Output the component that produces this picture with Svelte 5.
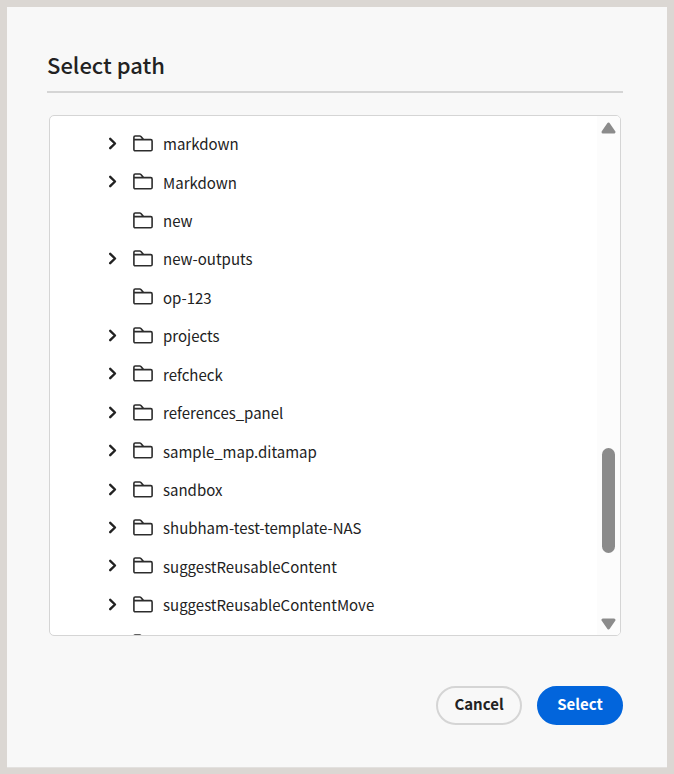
<script>
  let folders = $state([
    { name: "markdown", expandable: true },
    { name: "Markdown", expandable: true },
    { name: "new", expandable: false },
    { name: "new-outputs", expandable: true },
    { name: "op-123", expandable: false },
    { name: "projects", expandable: true },
    { name: "refcheck", expandable: true },
    { name: "references_panel", expandable: true },
    { name: "sample_map.ditamap", expandable: true },
    { name: "sandbox", expandable: true },
    { name: "shubham-test-template-NAS", expandable: true },
    { name: "suggestReusableContent", expandable: true },
    { name: "suggestReusableContentMove", expandable: true },
    { name: "", expandable: false },
  ]);

  // share of the scroll track above, under and below the thumb
  let scroll = { before: 313, thumb: 105, after: 65 };
</script>

<main class="page">
  <section class="dialog" aria-labelledby="dialog-title">
    <h1 id="dialog-title">Select path</h1>

    <div class="panel">
      <ul class="tree">
        {#each folders as folder (folder.name)}
          <li>
            <span class="toggle">
              {#if folder.expandable}
                <button class="chevron" aria-label="Expand {folder.name}">
                  <svg width="9" height="13" viewBox="0 0 9 13">
                    <path d="M2.2 1.8 7 6.5 2.2 11.2" />
                  </svg>
                </button>
              {/if}
            </span>
            <svg class="folder" width="20" height="17" viewBox="0 0 20 17">
              <path
                d="M.9 5V2.3C.9 1.5 1.4 1 2.2 1H6.7C7.2 1 7.6 1.2 7.9 1.5L10.6 4.6H17.8C18.6 4.6 19.1 5.1 19.1 5.9V14.5C19.1 15.3 18.6 15.8 17.8 15.8H2.2C1.4 15.8.9 15.3.9 14.5V4.6H10.6"
              />
            </svg>
            <span class="name">{folder.name}</span>
          </li>
        {/each}
      </ul>

      <div class="scrollbar">
        <button class="arrow" aria-label="Scroll up">
          <svg width="15" height="12" viewBox="0 0 15 12">
            <path d="M7.5 2 13 10H2Z" />
          </svg>
        </button>
        <div class="track">
          <div style="flex-grow: {scroll.before}"></div>
          <div class="thumb" style="flex-grow: {scroll.thumb}"></div>
          <div style="flex-grow: {scroll.after}"></div>
        </div>
        <button class="arrow" aria-label="Scroll down">
          <svg width="15" height="12" viewBox="0 0 15 12">
            <path d="M7.5 10 2 2H13Z" />
          </svg>
        </button>
      </div>
    </div>

    <footer>
      <button class="btn cancel">Cancel</button>
      <button class="btn select">Select</button>
    </footer>
  </section>
</main>

<style>
  :global(body) {
    background: #dbd7d3;
  }

  .page {
    box-sizing: border-box;
    min-height: 100vh;
    padding: 7px 7px 6px;
    display: flex;
    font-family: "Noto Sans CJK SC", "Open Sans", sans-serif;
    color: #222;
  }

  .dialog {
    flex: 1;
    box-sizing: border-box;
    padding: 40px 44px 40px 40px;
    background: #f8f8f8;
    border-bottom: 1px solid #e3e1df;
  }

  h1 {
    margin: 0 0 22px;
    padding-bottom: 10px;
    border-bottom: 2px solid #d5d5d5;
    font-size: 22px;
    line-height: 34px;
    font-weight: 500;
  }

  .panel {
    display: flex;
    height: 519px;
    margin: 0 2px;
    overflow: hidden;
    background: #fff;
    border: 1px solid #d5d5d5;
    border-radius: 5px;
  }

  .tree {
    flex: 1;
    display: grid;
    grid-auto-rows: 1fr;
    height: 538px;
    margin: 0;
    padding: 8px 0 0 55px;
    list-style: none;
  }

  li {
    display: flex;
    align-items: center;
    font-size: 15px;
    line-height: 24px;
  }

  .toggle {
    width: 28px;
    display: flex;
  }

  button {
    font-family: inherit;
    cursor: pointer;
  }

  .chevron,
  .arrow {
    display: flex;
    padding: 0;
    border: 0;
    background: none;
  }

  .chevron {
    padding-left: 3px;
  }

  .chevron path {
    fill: none;
    stroke: #222;
    stroke-width: 2.4;
    stroke-linecap: round;
    stroke-linejoin: round;
  }

  .folder {
    margin-right: 10px;
  }

  .folder path {
    fill: none;
    stroke: #2c2c2c;
    stroke-width: 1.6;
    stroke-linejoin: round;
  }

  .name {
    padding-top: 2px;
  }

  .scrollbar {
    width: 23px;
    display: flex;
    flex-direction: column;
    align-items: center;
    box-sizing: border-box;
    padding: 6px 0 5px;
    background: #fcfcfc;
  }

  .arrow path {
    fill: #8b8b8b;
    stroke: #8b8b8b;
    stroke-width: 3;
    stroke-linejoin: round;
  }

  .track {
    flex: 1;
    display: flex;
    flex-direction: column;
    width: 13px;
  }

  .thumb {
    border-radius: 7px;
    background: #8b8b8b;
  }

  footer {
    display: flex;
    justify-content: flex-end;
    gap: 15px;
    margin-top: 50px;
  }

  .btn {
    min-width: 86px;
    height: 39px;
    padding: 0 16px 3px;
    border: 2px solid #d5d5d5;
    border-radius: 20px;
    font-size: 15px;
    line-height: 24px;
    font-weight: 700;
  }

  .cancel {
    background: transparent;
    color: #222;
  }

  .select {
    background: #0265dc;
    border-color: #0265dc;
    color: #fff;
  }
</style>
